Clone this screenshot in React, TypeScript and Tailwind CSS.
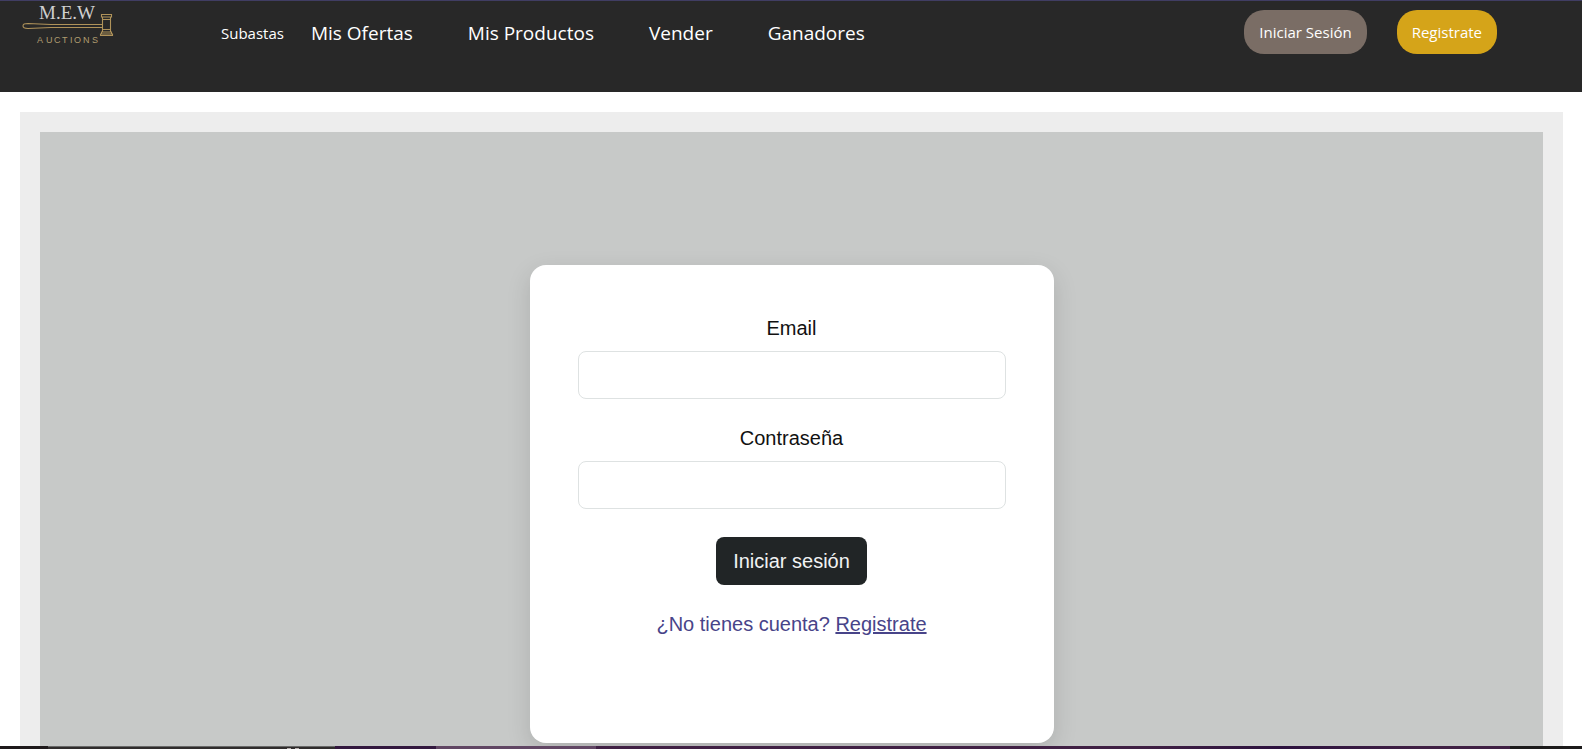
import { useState } from "react";

const links = ["Mis Ofertas", "Mis Productos", "Vender", "Ganadores"];

function Logo() {
  return (
    <svg width="96" height="44" viewBox="0 0 96 44" role="img" aria-label="M.E.W Auctions">
      <text x="17" y="18" fontSize="19" fill="#cfcfcf" fontFamily="'Liberation Serif', serif">
        M.E.W
      </text>
      <g fill="none" stroke="#b0935a" strokeWidth="1.1">
        <path d="M80 23.500H29L6 22.500C2.500 22.500 1 23.200 1 25S2.500 27.500 6 27.500L29 26.500H80" />
        <path d="M79.500 13.500H89.500V16H79.500ZM80.500 16V31M88.500 16V31M79.500 31H89.500V33H79.500ZM78.500 33H90.500V34.500H78.500ZM80.500 18.500H88.500M80.500 28.500H88.500" />
      </g>
      <text
        x="15 24 32 40 48 52 61 70"
        y="42"
        fontSize="9"
        fill="#b09d70"
        fontFamily="'Liberation Sans', sans-serif"
      >
        AUCTIONS
      </text>
    </svg>
  );
}

function Header() {
  return (
    <header className="flex h-23 items-start border-t border-[#403d63] bg-[#282828] font-['Open_Sans',sans-serif] text-white">
      <a href="#inicio" className="ml-[22px] w-[199px] shrink-0">
        <Logo />
      </a>
      <nav className="flex h-16 items-center gap-[55px] text-[19px] whitespace-nowrap">
        <a href="#subastas" className="-mr-7 text-[15px]">
          Subastas
        </a>
        {links.map((label) => (
          <a key={label} href="#">
            {label}
          </a>
        ))}
      </nav>
      <div className="mt-[9px] mr-[85px] ml-auto flex gap-[30px] text-[15px] whitespace-nowrap">
        <button type="button" className="h-11 rounded-[20px] bg-[#7a6d65] px-[15px]">
          Iniciar Sesión
        </button>
        <button type="button" className="h-11 rounded-[20px] bg-[#d5a419] px-[15px]">
          Registrate
        </button>
      </div>
    </header>
  );
}

interface FieldProps {
  id: string;
  label: string;
  type: string;
  value: string;
  onChange: (value: string) => void;
}

function Field({ id, label, type, value, onChange }: FieldProps) {
  return (
    <div className="mb-6 flex w-full flex-col items-center gap-2">
      <label htmlFor={id} className="text-[#111111]">
        {label}
      </label>
      <input
        id={id}
        type={type}
        value={value}
        onChange={(e) => onChange(e.target.value)}
        className="h-12 w-full rounded-lg border border-[#dee2e2] bg-white px-4"
      />
    </div>
  );
}

function LoginCard() {
  const [email, setEmail] = useState("");
  const [password, setPassword] = useState("");
  return (
    <form
      onSubmit={(e) => e.preventDefault()}
      className="flex w-full max-w-[524px] flex-col items-center rounded-2xl bg-white px-12 pt-12 pb-[104px] text-[20px] leading-[30px] shadow-[0_8px_24px_rgba(0,0,0,0.13)]"
    >
      <Field id="email" label="Email" type="email" value={email} onChange={setEmail} />
      <Field id="password" label="Contraseña" type="password" value={password} onChange={setPassword} />
      <button type="submit" className="mt-1 mb-6 h-12 rounded-lg bg-[#212526] px-[17px] text-[#f1f3f3]">
        Iniciar sesión
      </button>
      <p className="text-[#484489]">
        ¿No tienes cuenta?{" "}
        <a href="#registro" className="underline">
          Registrate
        </a>
      </p>
    </form>
  );
}

function BottomBar() {
  return (
    <div className="grid h-[3px] grid-cols-[48fr_287fr_101fr_160fr_914fr_72fr]">
      <div className="bg-[#1e191b]" />
      <div className="flex justify-end gap-1 border-t border-[#696969] bg-[#302d2d] pt-px pr-9">
        <span className="w-1 bg-[#b5aeae]" />
        <span className="w-1 bg-[#b5aeae]" />
      </div>
      <div className="bg-[#33183f]" />
      <div className="bg-[#614664]" />
      <div className="bg-linear-to-r from-[#402044] from-60% via-[#2d123f] via-75% to-[#402044] to-90%" />
      <div className="bg-[#1c1b1b]" />
    </div>
  );
}

export default function App() {
  return (
    <div className="flex min-h-screen flex-col bg-white font-['Liberation_Sans',Arial,sans-serif]">
      <Header />
      <main className="mt-5 mr-[19px] ml-5 flex flex-1 flex-col bg-[#ededed] px-5 pt-5">
        <section className="flex flex-1 flex-col items-center bg-[#c7c9c8] pt-[133px] pb-[3px]">
          <LoginCard />
        </section>
      </main>
      <BottomBar />
    </div>
  );
}
